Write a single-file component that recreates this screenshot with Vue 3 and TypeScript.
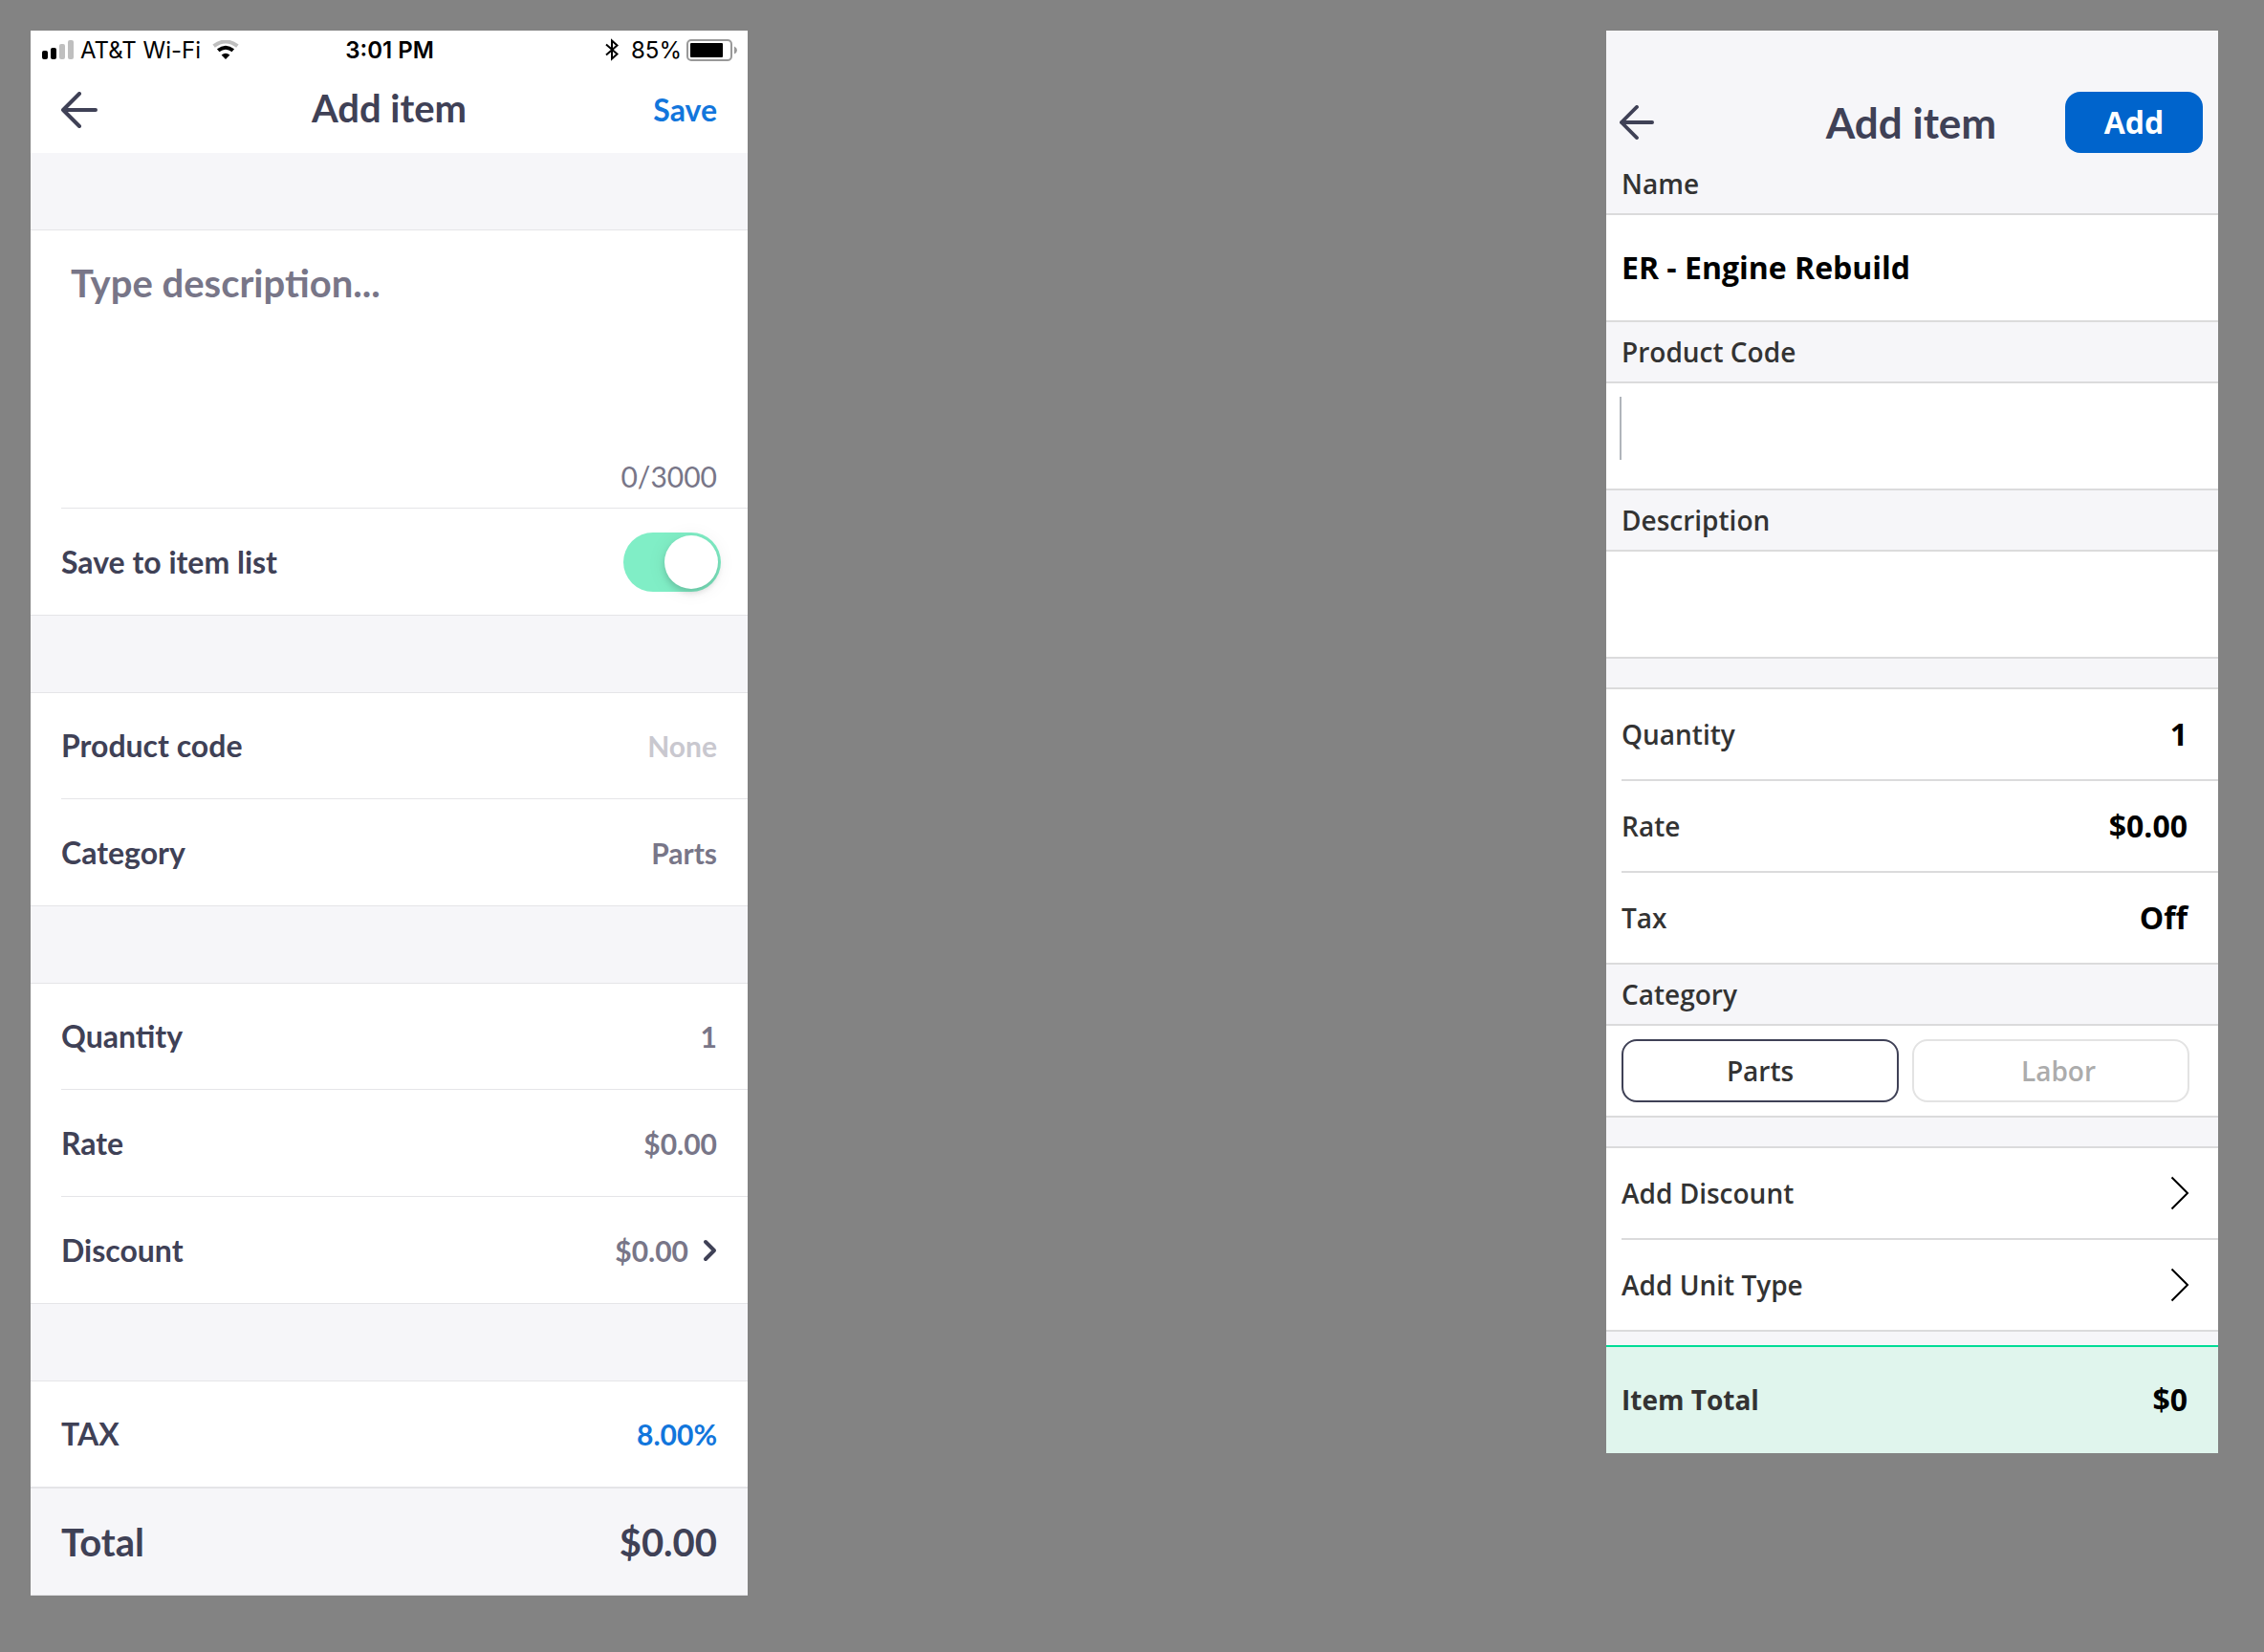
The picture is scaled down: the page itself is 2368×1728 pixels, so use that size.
<script setup lang="ts">
import { ref } from 'vue'

type Category = 'Parts' | 'Labor'

const description = ref('')
const saveToList = ref(true)
const productCode = ref('')
const category = ref<Category>('Parts')
const quantity = ref('1')
const rate = ref('$0.00')

const name = ref('ER - Engine Rebuild')
const code = ref('')
const details = ref('')
const unitQuantity = ref('1')
const unitRate = ref('$0.00')
const selected = ref<Category>('Parts')
const categories: Category[] = ['Parts', 'Labor']
const extras = ['Add Discount', 'Add Unit Type']
</script>

<template>
  <main class="board">
    <section class="screen classic">
      <div class="status">
        <div class="status-side">
          <svg width="34" height="20" viewBox="0 0 34 20" aria-hidden="true">
            <rect x="0" y="11" width="6" height="9" rx="2" fill="#000" />
            <rect x="9" y="8" width="6" height="12" rx="2" fill="#000" />
            <rect x="18" y="4" width="6" height="16" rx="2" fill="#bfbfbf" />
            <rect x="27" y="0" width="6" height="20" rx="2" fill="#bfbfbf" />
          </svg>
          <span class="carrier">AT&amp;T Wi-Fi</span>
          <svg width="28" height="20" viewBox="0 0 28 20" aria-hidden="true">
            <path d="M1.6 6.2Q14 -3.2 26.4 6.2" fill="none" stroke="#bfbfbf" stroke-width="4" />
            <path d="M6.2 10.8Q14 4.6 21.8 10.8" fill="none" stroke="#000" stroke-width="4" />
            <path d="M9.6 15.4Q14 12 18.4 15.4L14 20Z" fill="#000" />
          </svg>
        </div>
        <span class="clock">3:01 PM</span>
        <div class="status-side end">
          <svg width="14" height="24" viewBox="0 0 14 24" aria-hidden="true">
            <path d="M1 6.5L12.5 16.5L7 21.5V2.5L12.5 7.5L1 17.5" fill="none" stroke="#000" stroke-width="2" />
          </svg>
          <span class="charge">85%</span>
          <svg width="53" height="23" viewBox="0 0 53 23" aria-hidden="true">
            <rect x="1" y="1" width="46" height="21" rx="4" fill="none" stroke="#999" stroke-width="2" />
            <rect x="4" y="4" width="34" height="15" rx="1" fill="#000" />
            <path d="M50 7.5Q53 9 53 11.5Q53 14 50 15.5Z" fill="#999" />
          </svg>
        </div>
      </div>

      <header class="nav">
        <button class="icon-button" type="button" aria-label="Back">
          <svg width="38" height="38" viewBox="0 0 38 38" aria-hidden="true">
            <path d="M19 2L2 19L19 36M2 19H36" class="arrow" />
          </svg>
        </button>
        <h1>Add item</h1>
        <button class="save" type="button">Save</button>
      </header>

      <div class="group">
        <div class="note">
          <textarea v-model="description" placeholder="Type description..." aria-label="Description" maxlength="3000"></textarea>
          <span class="count">{{ description.length }}/3000</span>
        </div>
        <div class="row">
          <label for="save-to-list">Save to item list</label>
          <input id="save-to-list" v-model="saveToList" class="toggle" type="checkbox" />
        </div>
      </div>

      <div class="group">
        <div class="row">
          <label for="classic-code">Product code</label>
          <input id="classic-code" v-model="productCode" class="value" type="text" placeholder="None" />
        </div>
        <div class="row">
          <label for="classic-category">Category</label>
          <input id="classic-category" v-model="category" class="value" type="text" />
        </div>
      </div>

      <div class="group">
        <div class="row">
          <label for="classic-quantity">Quantity</label>
          <input id="classic-quantity" v-model="quantity" class="value" type="text" />
        </div>
        <div class="row">
          <label for="classic-rate">Rate</label>
          <input id="classic-rate" v-model="rate" class="value" type="text" />
        </div>
        <button class="row" type="button">
          <span>Discount</span>
          <span class="value linked">
            $0.00
            <svg width="16" height="24" viewBox="0 0 16 24" aria-hidden="true">
              <path d="M4 3L13 12L4 21" fill="none" stroke="#3f4156" stroke-width="4" stroke-linecap="round" stroke-linejoin="round" />
            </svg>
          </span>
        </button>
      </div>

      <div class="group tax">
        <button class="row" type="button">
          <span>TAX</span>
          <span class="value rate">8.00%</span>
        </button>
      </div>
      <div class="row total">
        <span>Total</span>
        <span>$0.00</span>
      </div>
    </section>

    <section class="screen modern">
      <header class="bar">
        <button class="icon-button" type="button" aria-label="Back">
          <svg width="36" height="36" viewBox="0 0 38 38" aria-hidden="true">
            <path d="M19 2L2 19L19 36M2 19H36" class="arrow" />
          </svg>
        </button>
        <h1>Add item</h1>
        <button class="add" type="button">Add</button>
      </header>

      <label class="heading" for="name">Name</label>
      <div class="field">
        <input id="name" v-model="name" type="text" />
      </div>
      <label class="heading" for="code">Product Code</label>
      <div class="field">
        <span class="caret"></span>
        <input id="code" v-model="code" type="text" />
      </div>
      <label class="heading" for="details">Description</label>
      <div class="field">
        <input id="details" v-model="details" type="text" />
      </div>

      <div class="spacer"></div>
      <div class="list">
        <div class="line">
          <label for="unit-quantity">Quantity</label>
          <input id="unit-quantity" v-model="unitQuantity" class="amount" type="text" />
        </div>
        <div class="line">
          <label for="unit-rate">Rate</label>
          <input id="unit-rate" v-model="unitRate" class="amount" type="text" />
        </div>
        <button class="line" type="button">
          <span>Tax</span>
          <span class="amount">Off</span>
        </button>
      </div>

      <div class="heading">Category</div>
      <div class="choices">
        <button
          v-for="item in categories"
          :key="item"
          type="button"
          :class="{ active: item === selected }"
          :aria-pressed="item === selected"
          @click="selected = item"
        >
          {{ item }}
        </button>
      </div>

      <div class="spacer"></div>
      <div class="list">
        <button v-for="item in extras" :key="item" class="line" type="button">
          <span>{{ item }}</span>
          <svg width="20" height="36" viewBox="0 0 20 36" aria-hidden="true">
            <path d="M1.5 1.5L18 18L1.5 34.5" fill="none" stroke="#000" stroke-width="2" />
          </svg>
        </button>
      </div>

      <div class="item-total">
        <span>Item Total</span>
        <span class="amount">$0</span>
      </div>
    </section>
  </main>
</template>

<style>
body {
  background: #838383;
}
</style>

<style scoped>
*,
*::before,
*::after {
  box-sizing: border-box;
}

.board {
  display: grid;
  grid-template-columns: 375fr 449fr 320fr;
  align-items: start;
  padding: 32px 48px 32px 32px;
}

button,
input,
textarea {
  margin: 0;
  padding: 0;
  border: 0;
  background: none;
  color: inherit;
  font: inherit;
  outline: none;
}

button {
  cursor: pointer;
}

h1 {
  margin: 0;
}

svg {
  display: block;
  flex: none;
}

.arrow {
  fill: none;
  stroke: #3f4156;
  stroke-width: 4;
  stroke-linecap: round;
  stroke-linejoin: round;
}

/* Classic screen */
.classic {
  background: #f6f6f9;
  color: #3f4156;
  font: 700 32px/48px Lato, sans-serif;
}

.status {
  display: grid;
  grid-template-columns: 1fr auto 1fr;
  align-items: center;
  height: 40px;
  padding: 0 11px 0 12px;
  background: #fff;
  color: #000;
  font: 400 24px/38px Inter, sans-serif;
}

.status span {
  padding-top: 2px;
}

.status-side {
  display: flex;
  align-items: center;
  gap: 6px;
}

.status-side.end {
  justify-content: flex-end;
  gap: 5px;
}

.carrier {
  margin-right: 6px;
}

.clock {
  font-weight: 600;
}

.charge {
  margin-left: 8px;
}

.nav {
  display: grid;
  grid-template-columns: 1fr auto 1fr;
  align-items: center;
  height: 88px;
  padding: 0 32px 2px;
  background: #fff;
}

.icon-button {
  justify-self: start;
}

.nav h1 {
  padding-bottom: 4px;
  font-size: 40px;
}

.save {
  justify-self: end;
}

.save,
.value.rate {
  color: #1276dc;
}

.group {
  margin-top: 80px;
  border-bottom: 1px solid #e5e5e8;
  background: #fff;
  box-shadow: inset 0 1px #e5e5e8;
}

.row {
  display: flex;
  align-items: center;
  justify-content: space-between;
  width: 100%;
  height: 112px;
  padding: 0 32px;
  text-align: left;
}

.group > :not(:last-child) {
  background: linear-gradient(#e5e5e8, #e5e5e8) 32px 100% / 100% 1px no-repeat;
}

.group > :last-child {
  height: 111px;
}

.note {
  display: flex;
  flex-direction: column;
  height: 292px;
  padding: 32px 32px 10px 42px;
}

.note textarea {
  flex: 1;
  font-size: 40px;
  line-height: 48px;
  resize: none;
}

.note textarea::placeholder {
  color: #787688;
  opacity: 1;
}

.count {
  align-self: flex-end;
  color: #787688;
  font-weight: 400;
  font-size: 30px;
}

.value {
  color: #787688;
  font-size: 30px;
}

input.value {
  flex: 1;
  min-width: 0;
  text-align: right;
}

.value::placeholder {
  color: #c9c8cf;
  opacity: 1;
}

.linked {
  display: flex;
  align-items: center;
  gap: 14px;
}

.toggle {
  appearance: none;
  display: flex;
  align-items: center;
  width: 102px;
  height: 62px;
  margin-right: -4px;
  padding: 3px;
  border-radius: 31px;
  background: #d5d5dc;
}

.toggle:checked {
  justify-content: flex-end;
  background: #80eec6;
}

.toggle::before {
  content: '';
  width: 56px;
  height: 56px;
  border-radius: 50%;
  background: #fff;
  box-shadow: 0 4px 6px rgb(0 0 0 / 14%), 0 2px 20px rgb(0 0 0 / 8%);
}

.tax {
  border-bottom-width: 2px;
}

.total {
  border-bottom: 1px solid #e5e5e8;
  font-size: 40px;
}

/* Modern screen */
.modern {
  grid-column: 3;
  padding-top: 64px;
  background: #f6f6f9;
  color: #333;
  font: 600 28px/40px 'Open Sans', sans-serif;
}

.bar {
  display: grid;
  grid-template-columns: 1fr auto 1fr;
  align-items: center;
  height: 64px;
  margin-bottom: 1px;
  padding: 0 16px 0 14px;
}

.bar h1 {
  color: #3f4156;
  font: 700 44px/48px Lato, sans-serif;
}

.add {
  justify-self: end;
  width: 144px;
  height: 64px;
  border-radius: 16px;
  background: #0064cc;
  color: #fff;
}

.add,
.field,
.amount {
  font-weight: 700;
  font-size: 32px;
}

.heading {
  display: flex;
  align-items: center;
  height: 64px;
  padding: 0 16px;
  border-bottom: 2px solid #dbdbdc;
}

.field {
  display: flex;
  height: 112px;
  padding: 0 14px;
  border-bottom: 2px solid #dbdbdc;
  background: #fff;
  color: #000;
}

.field input {
  flex: 1;
  min-width: 0;
  padding: 0 2px;
}

.caret {
  width: 2px;
  height: 66px;
  margin-top: 14px;
  background: #b0b5bb;
}

.spacer {
  height: 32px;
  border-bottom: 2px solid #dbdbdc;
}

.list {
  border-bottom: 2px solid #dbdbdc;
  background: #fff;
}

.line {
  display: flex;
  align-items: center;
  justify-content: space-between;
  width: 100%;
  height: 96px;
  padding: 0 30px 2px 16px;
  background: linear-gradient(#dbdbdc, #dbdbdc) 16px 100% / 100% 2px no-repeat;
}

.line:last-child {
  height: 94px;
  padding-bottom: 0;
  background: none;
}

.amount {
  padding-right: 2px;
  color: #000;
}

input.amount {
  flex: 1;
  min-width: 0;
  text-align: right;
}

.choices {
  display: grid;
  grid-template-columns: 1fr 1fr;
  align-items: center;
  gap: 14px;
  height: 96px;
  padding: 0 30px 0 16px;
  border-bottom: 2px solid #dbdbdc;
  background: #fff;
}

.choices button {
  height: 66px;
  padding-left: 16px;
  border: 2px solid #e3e3e3;
  border-radius: 16px;
  color: #acacac;
}

.choices .active {
  padding-left: 0;
  border-color: #3f4156;
  color: #333;
}

.item-total {
  display: flex;
  align-items: center;
  justify-content: space-between;
  height: 113px;
  margin-top: 14px;
  padding: 0 30px 2px 16px;
  border-top: 2px solid #00dc96;
  background: #e0f5ed;
  font-weight: 700;
}

@media (max-width: 1600px) {
  .board {
    grid-template-columns: 375fr 32px 320fr;
  }
}
</style>
